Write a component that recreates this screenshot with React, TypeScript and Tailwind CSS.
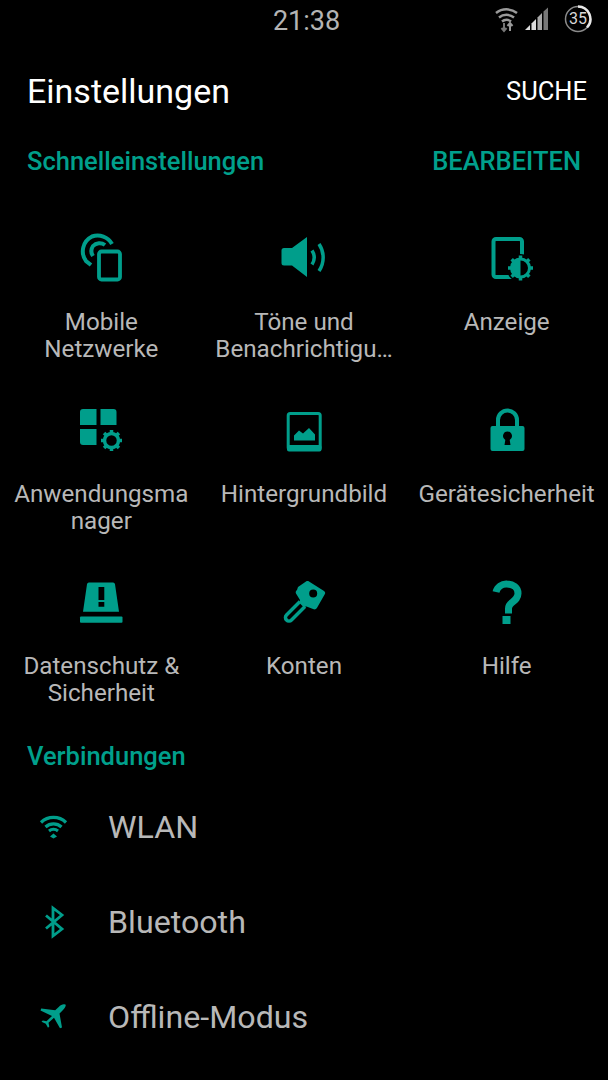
const Teal = '#009e8b';

function Gear({ cx, cy, r, half }: { cx: number; cy: number; r: number; half?: boolean }) {
  const teeth = [0, 45, 90, 135];
  return (
    <g>
      <circle cx={cx} cy={cy} r={r + 4} fill="#000" />
      {teeth.map((a) => (
        <rect key={a} x={cx - 1.75} y={cy - r - 2.5} width={3.5} height={2 * r + 5} fill={Teal} transform={`rotate(${a} ${cx} ${cy})`} />
      ))}
      <circle cx={cx} cy={cy} r={r - 1} fill="#000" stroke={Teal} strokeWidth={half ? 3 : 3.5} />
      {half && <path d={`M${cx} ${cy - r + 1}a${r - 1} ${r - 1} 0 0 0 0 ${2 * r - 2}z`} fill={Teal} />}
    </g>
  );
}

function Icon({ box, size = 64, children }: { box: string; size?: number; children: React.ReactNode }) {
  return (
    <svg width={size} height={size} viewBox={box} fill="none" className="shrink-0">
      {children}
    </svg>
  );
}

const quickItems = [
  {
    label: 'Mobile\nNetzwerke',
    icon: (
      <Icon box="69 226 64 64">
        <path d="M112 244a16.500 16.500 0 0 0-20-7.500a16.500 16.500 0 0 0-6 24.500l5 4" stroke={Teal} strokeWidth="4" />
        <path d="M105 245a9 9 0 0 0-12 1a9 9 0 0 0 0 10" stroke={Teal} strokeWidth="4" />
        <rect x="99" y="251.500" width="21" height="28" rx="2.500" fill="#000" stroke={Teal} strokeWidth="3.800" />
      </Icon>
    ),
  },
  {
    label: 'Töne und\nBenachrichtigu…',
    icon: (
      <Icon box="272 226 64 64">
        <path d="M307 237v40l-15-11.500h-8a2.500 2.500 0 0 1-2.500-2.500v-12.500a2.500 2.500 0 0 1 2.500-2.500h8z" fill={Teal} />
        <path d="M312 250.500a13 13 0 0 1 0 14" stroke={Teal} strokeWidth="3.500" />
        <path d="M319 244a24 24 0 0 1 0 27" stroke={Teal} strokeWidth="3.500" />
      </Icon>
    ),
  },
  {
    label: 'Anzeige',
    icon: (
      <Icon box="474 226 64 64">
        <rect x="492.500" y="239" width="28.500" height="38" rx="2.500" stroke={Teal} strokeWidth="4" />
        <Gear cx={519.500} cy={268} r={10} half />
      </Icon>
    ),
  },
  {
    label: 'Anwendungsma\nnager',
    icon: (
      <Icon box="69 398 64 64">
        <path d="M80 412a3 3 0 0 1 3-3h13.500v16H80z" fill={Teal} />
        <path d="M100.500 409h13a3 3 0 0 1 3 3v13h-16z" fill={Teal} />
        <path d="M80 429h16.500v16H83a3 3 0 0 1-3-3z" fill={Teal} />
        <Gear cx={111.500} cy={440.500} r={8} />
      </Icon>
    ),
  },
  {
    label: 'Hintergrundbild',
    icon: (
      <Icon box="272 398 64 64">
        <rect x="288.200" y="413.500" width="32" height="36" rx="2" stroke={Teal} strokeWidth="3" />
        <rect x="287" y="445" width="34.500" height="6.500" rx="2" fill={Teal} />
        <path d="M294 440.500v-5l5-5 4 3 6-5.500 6 6.500v6z" fill={Teal} />
      </Icon>
    ),
  },
  {
    label: 'Gerätesicherheit',
    icon: (
      <Icon box="474 398 64 64">
        <path d="M497 428v-8a9.500 9.500 0 0 1 19 0v8" stroke={Teal} strokeWidth="4" />
        <path fillRule="evenodd" clipRule="evenodd" d="M491.500 426h30a2 2 0 0 1 2 2v21a2 2 0 0 1-2 2h-30a2 2 0 0 1-2-2v-21a2 2 0 0 1 2-2zM506.500 431.500a4.500 4.500 0 0 0-2.200 8.400l-.8 5.100h6l-.8-5.100a4.500 4.500 0 0 0-2.200-8.400z" fill={Teal} />
      </Icon>
    ),
  },
  {
    label: 'Datenschutz &\nSicherheit',
    icon: (
      <Icon box="69 570 64 64">
        <path fillRule="evenodd" clipRule="evenodd" d="M89 582.500h24a2 2 0 0 1 2 1.700l4 27.500h-36l4-27.500a2 2 0 0 1 2-1.700zM98.500 587v13h5.800v-13zM98.500 602v4.700h5.800v-4.700z" fill={Teal} />
        <rect x="80" y="616.500" width="42.500" height="6.200" rx="1" fill={Teal} />
      </Icon>
    ),
  },
  {
    label: 'Konten',
    icon: (
      <Icon box="272 570 64 64">
        <path fillRule="evenodd" clipRule="evenodd" d="M298 587l8-5.500c1-.6 2-.6 3 0l15 9.500c1.200.8 1.500 2 .9 3l-8 14c-.7 1.200-2 1.700-3.200 1.300l-7.200-2.800-3 .5-4-4 .5-3-4-6.500c-.6-1.300-.3-2.500 1-3.500zM313.200 589.500a4 4 0 1 0 0 8a4 4 0 0 0 0-8z" fill={Teal} />
        <path d="M300 601.500l-13.500 13.500a3.500 3.500 0 0 0 5 5l13.500-13.500" stroke={Teal} strokeWidth="3.500" />
      </Icon>
    ),
  },
  {
    label: 'Hilfe',
    icon: (
      <Icon box="475 570 64 64">
        <path d="M496 592a10.500 10.500 0 0 1 11-8c6 .3 11 3.500 11 9.500 0 4.500-2.800 6.500-6 9-2.600 2-3.500 3.500-3.500 6v5" stroke={Teal} strokeWidth="7" />
        <rect x="502.500" y="616" width="8" height="8" fill={Teal} />
      </Icon>
    ),
  },
];

const connectionItems = [
  {
    label: 'WLAN',
    icon: (
      <svg width="40" height="40" viewBox="34 807 40 40" fill="none">
        <path d="M41 821.500a18 18 0 0 1 25 0" stroke={Teal} strokeWidth="3.200" />
        <path d="M45.500 826a12 12 0 0 1 16 0" stroke={Teal} strokeWidth="3.200" />
        <path d="M49 830a7 7 0 0 1 9 0" stroke={Teal} strokeWidth="3" />
        <path d="M53.500 832.500l3.500 3-3.500 2-3.500-2z" fill={Teal} />
      </svg>
    ),
  },
  {
    label: 'Bluetooth',
    icon: (
      <svg width="40" height="40" viewBox="34 902 40 40" fill="none">
        <path d="M46 914.500l16 13.500-9 7v-28l9 7-16 13.500" stroke={Teal} strokeWidth="2.800" />
      </svg>
    ),
  },
  {
    label: 'Offline-Modus',
    icon: (
      <svg width="40" height="40" viewBox="34 997 40 40" fill="none">
        <path d="M65.500 1003.500c.8 1.200-.5 3.500-2.500 5.500l-3.500 3.500 2.500 14-2 .7-6-10.500-5.500 5 .8 3.800-1.300 1.200-2.200-4-4.300-2 1.300-1.200 3.700.7 5.500-5.200-11.500-5.500.7-2 14 1.800 3.500-3.300c2-2 4.500-3.200 6.300-2.500z" fill={Teal} />
      </svg>
    ),
  },
];

export default function App() {
  return (
    <div className="w-[608px] h-[1080px] overflow-hidden bg-black flex flex-col font-['Roboto',sans-serif]">
      {/* Status bar */}
      <div className="relative h-[42px] shrink-0 flex items-center justify-center">
        <span className="text-[27px] leading-none text-[#b4b4b4] pl-[5px]">21:38</span>
        <div className="absolute right-[16px] top-[5px] flex items-center">
          <svg width="24" height="28" viewBox="494 6 24 28" fill="none" className="mr-[7px]">
            <path d="M496 14a17 17 0 0 1 21 0" stroke="#9a9a9a" strokeWidth="2.500" />
            <path d="M499 18.500a12 12 0 0 1 15 0" stroke="#9a9a9a" strokeWidth="2.500" />
            <path d="M502 22.500a7 7 0 0 1 9 0" stroke="#9a9a9a" strokeWidth="2.500" />
            <path d="M504 24v8M501.500 29l2.500 3 2.500-3" stroke="#777" strokeWidth="2" />
            <path d="M510 32v-8M507.500 27l2.500-3 2.500 3" stroke="#999" strokeWidth="2" />
          </svg>
          <svg width="24" height="24" viewBox="525 9 24 24" className="mr-[15px]">
            <path d="M525 32l5-5v5z" fill="#ddd" />
            <path d="M531.500 32v-6.500l4.500-4.500v11z" fill="#ddd" />
            <path d="M537.500 32v-12.500l4.500-4.500v17z" fill="#aaa" />
            <path d="M543.500 32v-18.500l4.500-4v22.500z" fill="#777" />
          </svg>
          <div className="relative w-[28px] h-[28px] flex items-center justify-center">
            <svg width="28" height="28" viewBox="0 0 28 28" fill="none" className="absolute inset-0">
              <circle cx="14" cy="14" r="12.500" stroke="#8a8a8a" strokeWidth="1.500" />
              <path d="M14 1.500a12.500 12.500 0 0 1 9 21" stroke="#e8e8e8" strokeWidth="2.500" />
            </svg>
            <span className="relative text-[16px] leading-none text-[#d8d8d8]">35</span>
          </div>
        </div>
      </div>

      {/* Header */}
      <div className="h-[60px] mt-[19px] shrink-0 flex items-center justify-between pl-[27px] pr-[21px]">
        <h1 className="text-[34px] leading-none text-white">Einstellungen</h1>
        <button className="text-[25.500px] leading-none text-white pt-[1px]">SUCHE</button>
      </div>

      {/* Schnelleinstellungen */}
      <div className="mt-[19px] h-[44px] shrink-0 flex items-center justify-between pl-[27px] pr-[27px]">
        <h2 className="text-[25.500px] leading-none font-medium text-[#00a08c]">Schnelleinstellungen</h2>
        <button className="text-[25.500px] leading-none font-medium text-[#00a08c]">BEARBEITEN</button>
      </div>

      <div className="mt-[42px] grid grid-cols-3 auto-rows-[172px] shrink-0">
        {quickItems.map((item) => (
          <div key={item.label} className="flex flex-col items-center">
            {item.icon}
            <p className="mt-[19px] text-center text-[24.200px] leading-[27px] text-[#b8b8b8] whitespace-pre">{item.label}</p>
          </div>
        ))}
      </div>

      {/* Verbindungen */}
      <h2 className="mt-[-7px] pl-[27px] h-[44px] shrink-0 flex items-center text-[25.500px] leading-none font-medium text-[#00a08c]">Verbindungen</h2>

      <div className="mt-[1px] flex flex-col">
        {connectionItems.map((item) => (
          <div key={item.label} className="h-[95px] shrink-0 flex items-center pl-[34px]">
            {item.icon}
            <span className="ml-[34px] text-[32.200px] leading-none text-[#b8b8b8]">{item.label}</span>
          </div>
        ))}
      </div>
    </div>
  );
}
